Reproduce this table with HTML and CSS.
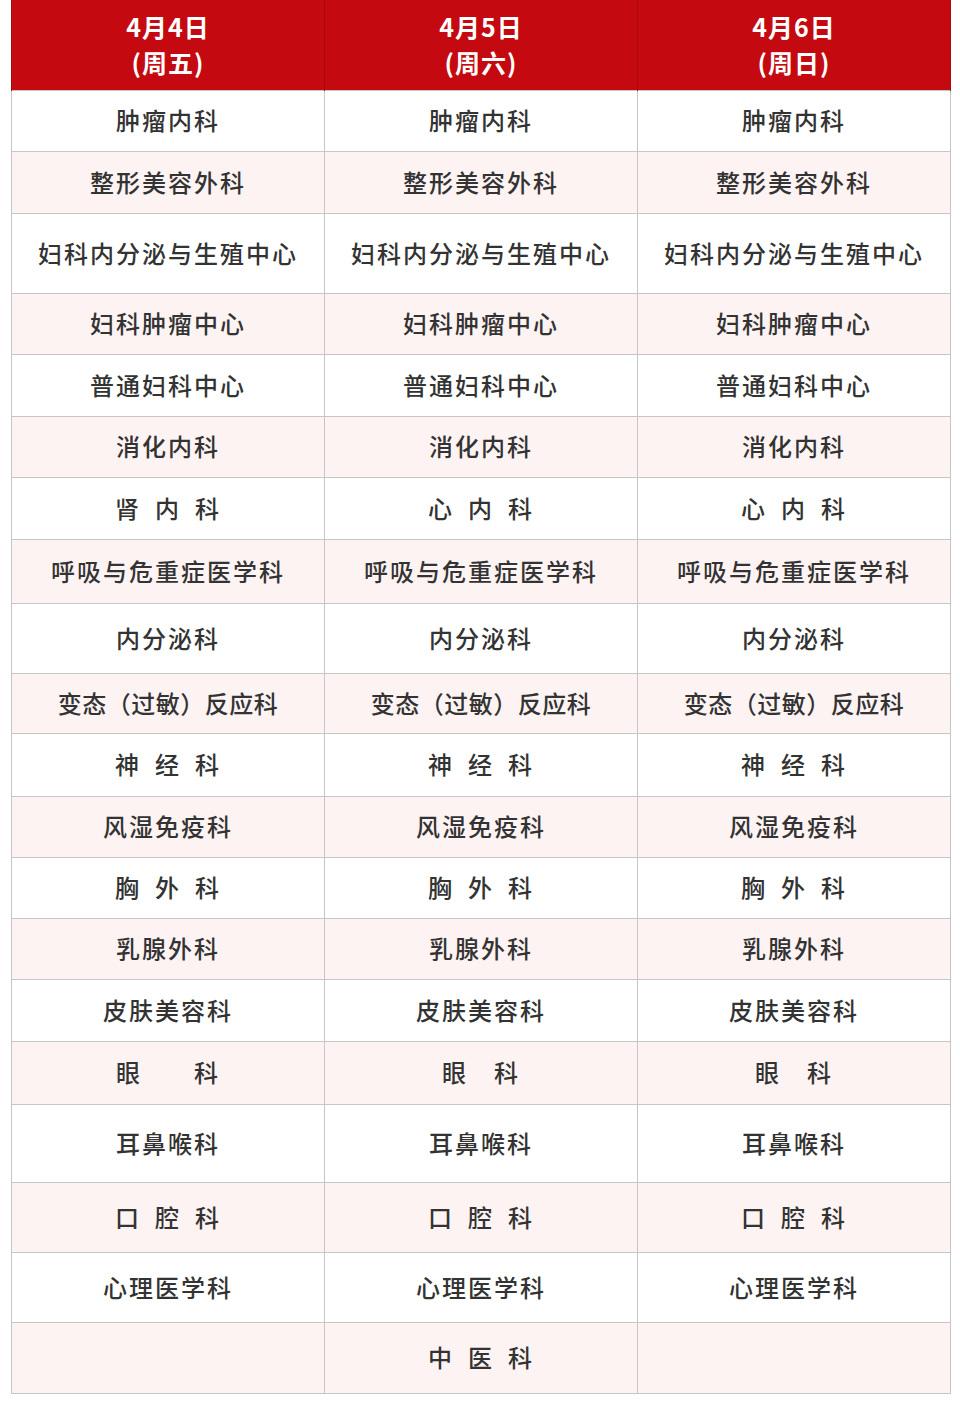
FILE: index.html
```html
<!DOCTYPE html>
<html lang="zh-CN">
<head>
<meta charset="utf-8">
<title>门诊安排</title>
<link rel="stylesheet" href="styles.css">
</head>
<body>
<table class="schedule">
  <colgroup><col class="c"><col class="c"><col class="c"></colgroup>
  <thead>
    <tr class="head">
      <th><span class="hl">4月4日</span><span class="hl">(周五)</span></th>
      <th><span class="hl">4月5日</span><span class="hl">(周六)</span></th>
      <th><span class="hl">4月6日</span><span class="hl">(周日)</span></th>
    </tr>
  </thead>
  <tbody>
    <tr class="h61"><td>肿瘤内科</td><td>肿瘤内科</td><td>肿瘤内科</td></tr>
    <tr class="h62 alt"><td>整形美容外科</td><td>整形美容外科</td><td>整形美容外科</td></tr>
    <tr class="h80"><td>妇科内分泌与生殖中心</td><td>妇科内分泌与生殖中心</td><td>妇科内分泌与生殖中心</td></tr>
    <tr class="h61 alt"><td>妇科肿瘤中心</td><td>妇科肿瘤中心</td><td>妇科肿瘤中心</td></tr>
    <tr class="h62"><td>普通妇科中心</td><td>普通妇科中心</td><td>普通妇科中心</td></tr>
    <tr class="h61 alt"><td>消化内科</td><td>消化内科</td><td>消化内科</td></tr>
    <tr class="h62"><td>肾&ensp;内&ensp;科</td><td>心&ensp;内&ensp;科</td><td>心&ensp;内&ensp;科</td></tr>
    <tr class="h64 alt"><td>呼吸与危重症医学科</td><td>呼吸与危重症医学科</td><td>呼吸与危重症医学科</td></tr>
    <tr class="h70"><td>内分泌科</td><td>内分泌科</td><td>内分泌科</td></tr>
    <tr class="h60 alt"><td class="tight">变态（过敏）反应科</td><td class="tight">变态（过敏）反应科</td><td class="tight">变态（过敏）反应科</td></tr>
    <tr class="h63"><td>神&ensp;经&ensp;科</td><td>神&ensp;经&ensp;科</td><td>神&ensp;经&ensp;科</td></tr>
    <tr class="h61 alt"><td>风湿免疫科</td><td>风湿免疫科</td><td>风湿免疫科</td></tr>
    <tr class="h61"><td>胸&ensp;外&ensp;科</td><td>胸&ensp;外&ensp;科</td><td>胸&ensp;外&ensp;科</td></tr>
    <tr class="h61 alt"><td>乳腺外科</td><td>乳腺外科</td><td>乳腺外科</td></tr>
    <tr class="h62"><td>皮肤美容科</td><td>皮肤美容科</td><td>皮肤美容科</td></tr>
    <tr class="h63 alt"><td>眼&emsp;&emsp;科</td><td>眼&emsp;科</td><td>眼&emsp;科</td></tr>
    <tr class="h78"><td>耳鼻喉科</td><td>耳鼻喉科</td><td>耳鼻喉科</td></tr>
    <tr class="h70 alt"><td>口&ensp;腔&ensp;科</td><td>口&ensp;腔&ensp;科</td><td>口&ensp;腔&ensp;科</td></tr>
    <tr class="h70"><td>心理医学科</td><td>心理医学科</td><td>心理医学科</td></tr>
    <tr class="h71 alt"><td></td><td>中&ensp;医&ensp;科</td><td></td></tr>
  </tbody>
</table>
</body>
</html>
```

FILE: styles.css
```css
html, body {
  margin: 0;
  padding: 0;
  background: #ffffff;
}

.schedule {
  margin-left: 11px;
  width: 940px;
  border-collapse: collapse;
  table-layout: fixed;
  font-family: "Noto Sans CJK SC", "Noto Sans", sans-serif;
}

.schedule th,
.schedule td {
  padding: 0;
  text-align: center;
  vertical-align: middle;
}

.head th {
  height: 88px;
  background: #c40a10;
  color: #ffffff;
  font-size: 25px;
  font-weight: 700;
  letter-spacing: 1px;
  border-left: 1px solid #a8080c;
  border-right: 1px solid #a8080c;
  padding-bottom: 2px;
}

.hl {
  display: block;
  line-height: 36px;
}

.schedule td {
  border: 1px solid #c6c6c6;
  color: #333333;
  font-size: 24px;
  font-weight: 500;
  letter-spacing: 2px;
  line-height: 30px;
  white-space: nowrap;
  padding-bottom: 2px;
}

.schedule td.tight {
  letter-spacing: 0.5px;
}

.alt td {
  background: #fef3f3;
}

.h60 td { height: 57px; }
.h61 td { height: 58px; }
.h62 td { height: 59px; }
.h63 td { height: 60px; }
.h64 td { height: 61px; }
.h70 td { height: 67px; }
.h71 td { height: 68px; }
.h78 td { height: 75px; }
.h80 td { height: 77px; }
```
